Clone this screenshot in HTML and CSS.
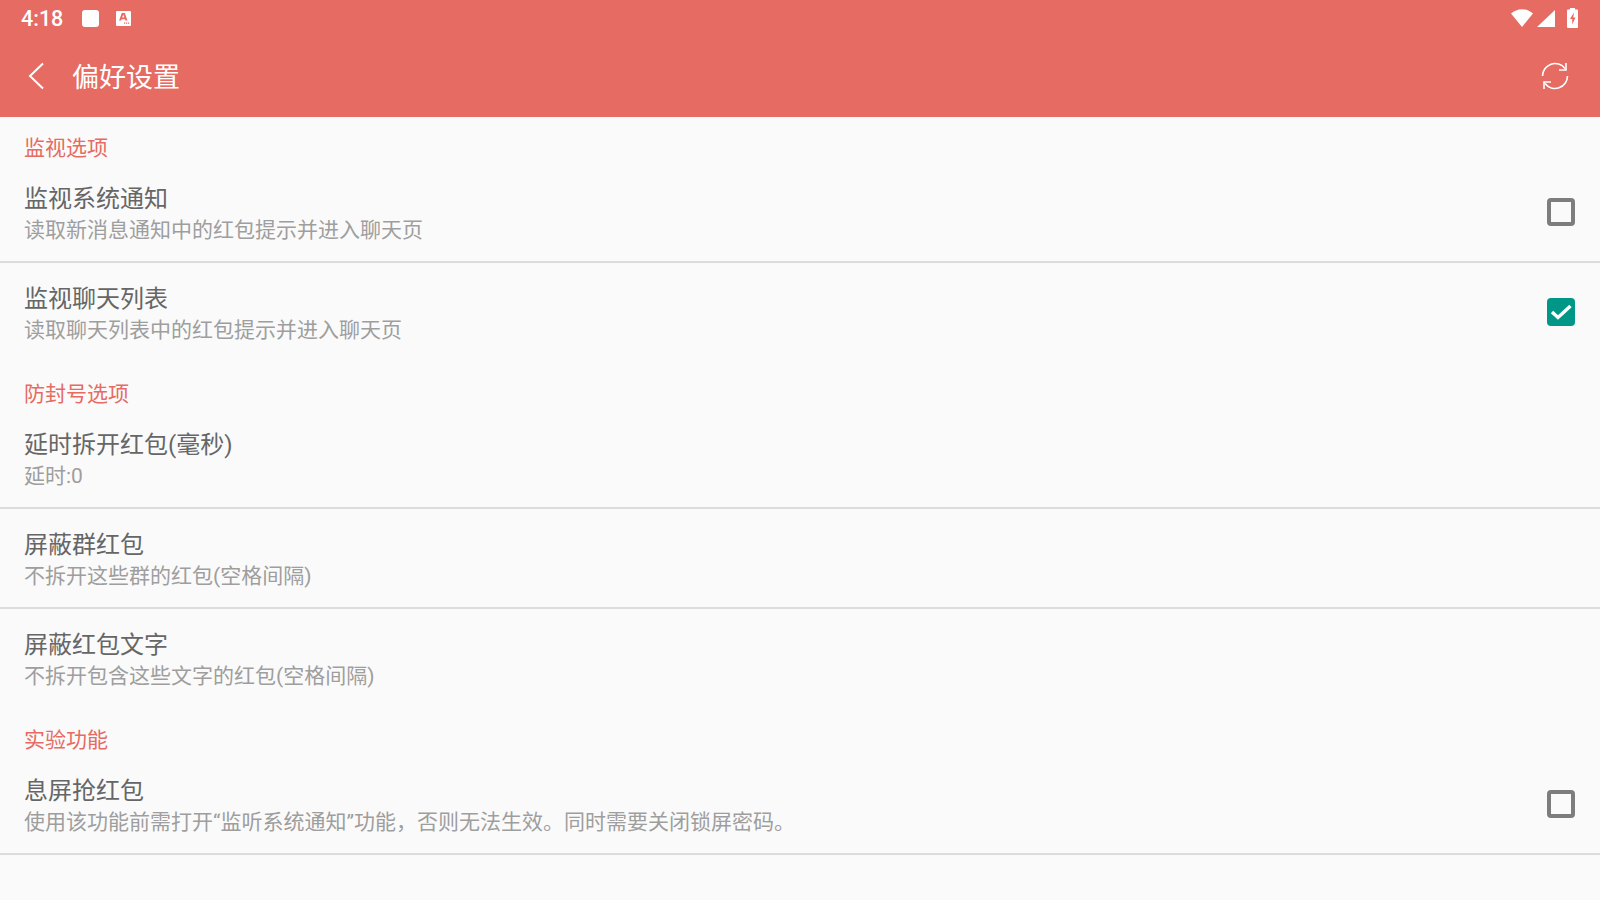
FILE: index.html
```html
<!DOCTYPE html>
<html lang="zh-CN">
<head>
  <meta charset="UTF-8">
  <title>偏好设置</title>
  <link rel="stylesheet" href="styles.css">
</head>
<body>
  <header class="appbar">
    <div class="statusbar">
      <span class="clock">4:18</span>
      <span class="note-square"></span>
      <svg class="note-a" width="15" height="15" viewBox="0 0 15 15">
        <path fill="#fff" d="M1 0h13a1 1 0 0 1 1 1v13a1 1 0 0 1-1 1H1a1 1 0 0 1-1-1V1a1 1 0 0 1 1-1z"/>
        <path fill="#e66b63" fill-rule="evenodd" d="M5.800 2h3l2.700 7.500H9.400L9 8.200H5.600l-.4 1.300H3.100zM6.200 6.400h2.200L7.300 3.600zM8 11.500h1.200v1.200H8zM10 11.500h1.200v1.200H10zM12 11.500h1.200v1.200H12z"/>
      </svg>
      <span class="status-right">
        <svg class="wifi" width="22" height="18" viewBox="0 0 22 18"><path fill="#fff" d="M0 4.500C3 1.800 6.800.2 11 .2s8 1.600 11 4.300L11 18z"/></svg>
        <svg class="signal" width="18" height="17" viewBox="0 0 18 17"><path fill="#fff" d="M18 0v17H0z"/></svg>
        <svg class="battery" width="11" height="20" viewBox="0 0 11 20"><path fill="#fff" fill-rule="evenodd" d="M3 0h5v1.500h2a1 1 0 0 1 1 1V19a1 1 0 0 1-1 1H1a1 1 0 0 1-1-1V2.500a1 1 0 0 1 1-1h2zM7 4.500L3 11h2.200v5.500L8.500 9.500H6.300z"/></svg>
      </span>
    </div>
    <div class="toolbar">
      <svg class="back" width="16" height="28" viewBox="0 0 16 28"><path fill="none" stroke="#fff" stroke-width="2" d="M15 1.500L2 14l13 12.500"/></svg>
      <h1>偏好设置</h1>
      <svg class="refresh" width="28" height="28" viewBox="0 0 28 28">
        <g fill="none" stroke="#fff" stroke-width="1.600">
          <path d="M1.500 14A12.500 12.500 0 0 1 24 6.500"/>
          <path d="M26.500 14A12.500 12.500 0 0 1 4 21.500"/>
          <path d="M25 1v7h-7"/>
          <path d="M3 27v-7h7"/>
        </g>
      </svg>
    </div>
  </header>

  <main>
    <h2 class="category">监视选项</h2>
    <div class="pref">
      <div class="pref-text">
        <div class="pref-title">监视系统通知</div>
        <div class="pref-sub">读取新消息通知中的红包提示并进入聊天页</div>
      </div>
      <span class="check"></span>
    </div>
    <div class="pref no-line">
      <div class="pref-text">
        <div class="pref-title">监视聊天列表</div>
        <div class="pref-sub">读取聊天列表中的红包提示并进入聊天页</div>
      </div>
      <span class="check on">
        <svg width="28" height="28" viewBox="0 0 28 28"><path fill="none" stroke="#fff" stroke-width="3.400" d="M5 14l6 5.500L23.500 8"/></svg>
      </span>
    </div>

    <h2 class="category">防封号选项</h2>
    <div class="pref">
      <div class="pref-text">
        <div class="pref-title">延时拆开红包(毫秒)</div>
        <div class="pref-sub">延时:0</div>
      </div>
    </div>
    <div class="pref">
      <div class="pref-text">
        <div class="pref-title">屏蔽群红包</div>
        <div class="pref-sub">不拆开这些群的红包(空格间隔)</div>
      </div>
    </div>
    <div class="pref no-line">
      <div class="pref-text">
        <div class="pref-title">屏蔽红包文字</div>
        <div class="pref-sub">不拆开包含这些文字的红包(空格间隔)</div>
      </div>
    </div>

    <h2 class="category">实验功能</h2>
    <div class="pref">
      <div class="pref-text">
        <div class="pref-title">息屏抢红包</div>
        <div class="pref-sub">使用该功能前需打开“监听系统通知”功能，否则无法生效。同时需要关闭锁屏密码。</div>
      </div>
      <span class="check"></span>
    </div>
  </main>
</body>
</html>
```

FILE: styles.css
```css
html, body {
  margin: 0;
  height: 900px;
  overflow: hidden;
}
body {
  background-color: #fafafa;
  font-family: "Roboto", "Noto Sans CJK SC", sans-serif;
}
.appbar {
  background-color: #e66b63;
  height: 117px;
  color: #fff;
}
.statusbar {
  height: 36px;
  display: flex;
  align-items: center;
  padding: 0 22px 0 21px;
}
.clock {
  font-size: 21.5px;
  font-weight: 500;
  width: 61px;
}
.note-square {
  width: 17px;
  height: 17px;
  background-color: #fff;
  border-radius: 3px;
  margin-right: 17px;
}
.status-right {
  margin-left: auto;
  display: flex;
  align-items: center;
}
.wifi {
  margin-right: 4px;
}
.signal {
  margin-right: 12px;
}
.toolbar {
  height: 81px;
  display: flex;
  align-items: center;
  padding: 0 31px 2px 28px;
  box-sizing: border-box;
}
.back {
  margin-right: 28px;
}
h1 {
  font-size: 27px;
  font-weight: 400;
  margin: 0;
  flex: 1;
}
.category {
  height: 46px;
  line-height: 62px;
  margin: 0;
  padding-left: 24px;
  font-size: 21px;
  font-weight: 400;
  color: #e66b63;
}
.pref {
  height: 100px;
  box-sizing: border-box;
  display: flex;
  align-items: center;
  padding: 0 24px;
  border-bottom: 2px solid #dcdcdc;
}
.pref.no-line {
  border-bottom-color: transparent;
}
.pref-text {
  flex: 1;
  margin-top: 4px;
}
.pref-title {
  font-size: 24px;
  line-height: 32px;
  color: #666;
}
.pref-sub {
  font-size: 21px;
  line-height: 30px;
  color: #9e9e9e;
}
.check {
  width: 28px;
  height: 28px;
  box-sizing: border-box;
  border: 4px solid #7d7d7d;
  border-radius: 4px;
  margin-right: 1px;
  display: block;
}
.check.on {
  background-color: #009688;
  border: 0;
}
.check svg {
  display: block;
}
```
